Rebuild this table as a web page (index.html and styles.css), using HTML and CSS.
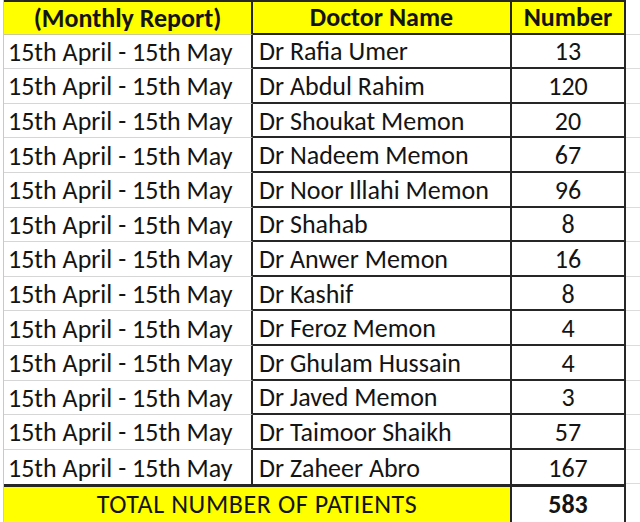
FILE: index.html
```html
<!DOCTYPE html>
<html>
<head>
<meta charset="utf-8">
<link rel="stylesheet" href="styles.css">
</head>
<body>
<div class="sheet">
  <div class="c c1 hd">(Monthly Report)</div>
  <div class="c c2 hd">Doctor Name</div>
  <div class="c c3 hd">Number</div>
  <div class="c cx hdx"></div>

  <div class="c c1">15th April - 15th May</div><div class="c c2">Dr Rafia Umer</div><div class="c c3">13</div><div class="c cx"></div>
  <div class="c c1">15th April - 15th May</div><div class="c c2">Dr Abdul Rahim</div><div class="c c3">120</div><div class="c cx"></div>
  <div class="c c1">15th April - 15th May</div><div class="c c2">Dr Shoukat Memon</div><div class="c c3">20</div><div class="c cx"></div>
  <div class="c c1">15th April - 15th May</div><div class="c c2">Dr Nadeem Memon</div><div class="c c3">67</div><div class="c cx"></div>
  <div class="c c1">15th April - 15th May</div><div class="c c2">Dr Noor Illahi Memon</div><div class="c c3">96</div><div class="c cx"></div>
  <div class="c c1">15th April - 15th May</div><div class="c c2">Dr Shahab</div><div class="c c3">8</div><div class="c cx"></div>
  <div class="c c1">15th April - 15th May</div><div class="c c2">Dr Anwer Memon</div><div class="c c3">16</div><div class="c cx"></div>
  <div class="c c1">15th April - 15th May</div><div class="c c2">Dr Kashif</div><div class="c c3">8</div><div class="c cx"></div>
  <div class="c c1">15th April - 15th May</div><div class="c c2">Dr Feroz Memon</div><div class="c c3">4</div><div class="c cx"></div>
  <div class="c c1">15th April - 15th May</div><div class="c c2">Dr Ghulam Hussain</div><div class="c c3">4</div><div class="c cx"></div>
  <div class="c c1">15th April - 15th May</div><div class="c c2">Dr Javed Memon</div><div class="c c3">3</div><div class="c cx"></div>
  <div class="c c1">15th April - 15th May</div><div class="c c2">Dr Taimoor Shaikh</div><div class="c c3">57</div><div class="c cx"></div>
  <div class="c c1 last">15th April - 15th May</div><div class="c c2 last">Dr Zaheer Abro</div><div class="c c3 last">167</div><div class="c cx"></div>

  <div class="c total">TOTAL NUMBER OF PATIENTS</div>
  <div class="c c3 tnum">583</div>
  <div class="c cx"></div>
</div>
</body>
</html>
```
FILE: styles.css
```css
html, body {
  margin: 0;
  padding: 0;
  background: #ffffff;
}
body {
  width: 640px;
  height: 522px;
  overflow: hidden;
  font-family: Carlito, Lato, "Open Sans", sans-serif;
  font-size: 26px;
  color: #141414;
}
.sheet {
  display: grid;
  grid-template-columns: 249px 259px 114px 1fr;
  grid-template-rows: 34.6px repeat(13, 34.6px) 40px;
  margin-left: 3px;
  border-left: 1px solid #c9c9c9;
  background: #fff;
}
.c {
  box-sizing: border-box;
  display: flex;
  align-items: center;
  white-space: nowrap;
  overflow: hidden;
}
.c1 {
  padding-left: 4px;
  padding-top: 1px;
  border-right: 2px solid #262626;
  border-bottom: 1px solid #d6d6d6;
}
.c2 {
  padding-left: 6px;
  padding-top: 1px;
  border-right: 2px solid #262626;
  border-bottom: 2px solid #262626;
}
.c3 {
  justify-content: center;
  padding-top: 1px;
  border-right: 2px solid #262626;
  border-bottom: 2px solid #262626;
}
.cx {
  border-bottom: 1px solid #dcdcdc;
}
.hd {
  background: #ffff00;
  font-weight: bold;
  justify-content: center;
  padding-left: 0;
  padding-top: 0;
  border-top: 2px solid #262626;
}
.c1.hd {
  border-bottom: 1px solid #c8c8a0;
}
.hdx {
  border-top: 0;
}
.last {
  border-bottom: 0;
}
.total {
  grid-column: 1 / 3;
  background: #ffff00;
  justify-content: center;
  letter-spacing: 0.6px;
  border-top: 3px solid #262626;
  border-right: 2px solid #262626;
  padding-bottom: 4px;
}
.tnum {
  font-weight: bold;
  border-top: 3px solid #262626;
  border-bottom: 0;
  padding-top: 0;
  padding-bottom: 4px;
}
```
